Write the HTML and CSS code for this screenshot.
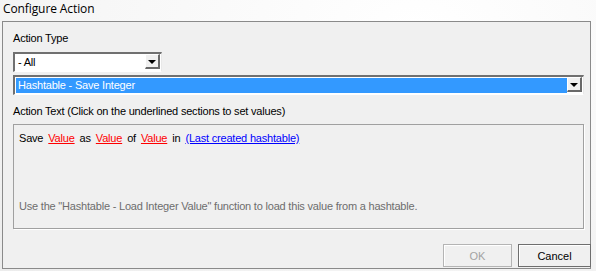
FILE: index.html
```html
<!DOCTYPE html>
<html lang="en">
  <head>
    <meta charset="UTF-8" />
    <title>Configure Action</title>
    <link rel="stylesheet" href="styles.css">
  </head>
  <body>
    <div class="titlebar">Configure Action</div>

    <div class="panel">
      <div class="label">Action Type</div>
      <div class="combo combo-small">
        <span class="combo-value">- All</span>
        <span class="combo-btn"><span class="arrow"></span></span>
      </div>
      <div class="combo combo-wide">
        <span class="combo-value selected">Hashtable - Save Integer</span>
        <span class="combo-btn"><span class="arrow"></span></span>
      </div>

      <div class="label label-text">Action Text (Click on the underlined sections to set values)</div>
      <div class="textbox">
        <div class="action-line">
          <span>Save</span>
          <a class="param">Value</a>
          <span>as</span>
          <a class="param">Value</a>
          <span>of</span>
          <a class="param">Value</a>
          <span>in</span>
          <a class="preset">(Last created hashtable)</a>
        </div>
        <div class="hint">Use the "Hashtable - Load Integer Value" function to load this value from a hashtable.</div>
      </div>

      <div class="button-row">
        <button class="btn" disabled>OK</button>
        <button class="btn">Cancel</button>
      </div>
    </div>
  </body>
</html>
```

FILE: styles.css
```css
body {
  margin: 0;
  width: 596px;
  height: 271px;
  overflow: hidden;
  font-family: "Liberation Sans", Arial, sans-serif;
  font-size: 11px;
  letter-spacing: -0.2px;
  color: #000;
  background: radial-gradient(ellipse at 70% 10%, #ffffff 0%, #f6f6f6 60%, #ececec 100%);
}
.titlebar {
  height: 21px;
  padding-left: 3px;
  font-family: "Open Sans", "Noto Sans", sans-serif;
  font-size: 12px;
  letter-spacing: -0.1px;
  line-height: 17px;
}
.panel {
  margin-left: 2px;
  width: 589px;
  height: 248px;
  border: 1px solid #8a8a8a;
  background: #f0f0f0;
  padding: 10px 0 0 10px;
  box-sizing: border-box;
}
.label {
  line-height: 13px;
  height: 13px;
  margin-bottom: 7px;
}
.label-text {
  margin-top: 10px;
  margin-bottom: 6px;
}
.combo {
  display: flex;
  height: 20px;
  box-sizing: border-box;
  background: #fff;
  border-top: 2px solid #707070;
  border-left: 2px solid #707070;
  border-right: 1px solid #e8e8e8;
  border-bottom: 1px solid #ffffff;
  padding: 1px;
}
.combo-small {
  width: 149px;
}
.combo-wide {
  width: 571px;
  margin-top: 3px;
}
.combo-value {
  flex: 1;
  line-height: 14px;
  padding-left: 2px;
}
.combo-value.selected {
  background: #3399ff;
  color: #fff;
}
.combo-btn {
  width: 15px;
  height: 15px;
  margin-top: -1px;
  box-sizing: border-box;
  background: #f0f0f0;
  border-top: 1px solid #ffffff;
  border-left: 1px solid #ffffff;
  border-right: 2px solid #696969;
  border-bottom: 2px solid #696969;
  display: flex;
  align-items: center;
  justify-content: center;
}
.arrow {
  width: 0;
  height: 0;
  border-left: 4px solid transparent;
  border-right: 4px solid transparent;
  border-top: 4px solid #000;
  margin-top: 1px;
}
.textbox {
  width: 571px;
  height: 105px;
  box-sizing: border-box;
  border: 1px solid #a0a0a0;
  box-shadow: 1px 1px 0 #ffffff;
  padding: 7px 5px 15px 5px;
  display: flex;
  flex-direction: column;
}
.action-line {
  display: flex;
  gap: 5px;
  line-height: 13px;
}
.param {
  color: #ff0000;
  text-decoration: underline;
}
.preset {
  color: #0000ff;
  text-decoration: underline;
}
.hint {
  margin-top: auto;
  line-height: 13px;
  color: #6d6d6d;
}
.button-row {
  display: flex;
  justify-content: flex-end;
  gap: 6px;
  margin-top: 15px;
  width: 578px;
}
.btn {
  width: 73px;
  height: 23px;
  font-family: "Liberation Sans", Arial, sans-serif;
  font-size: 11px;
  background: #f0f0f0;
  border: 1px solid #6e6e6e;
  box-shadow: inset 1px 1px 0 #ffffff;
  padding: 0;
  color: #000;
}
.btn:disabled {
  width: 69px;
  border-color: #b4b4b4;
  color: #a3a3a3;
}
```
